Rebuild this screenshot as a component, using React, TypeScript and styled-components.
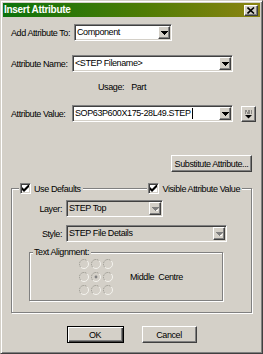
import React from 'react';
import styled, { createGlobalStyle, css } from 'styled-components';

const GlobalStyle = createGlobalStyle`
  html, body {
    margin: 0;
    padding: 0;
    background: #d4d0c8;
  }
  body {
    font-family: "Liberation Sans", Arial, sans-serif;
    font-size: 9px;
    letter-spacing: -0.4px;
    color: #000;
  }
  * {
    box-sizing: border-box;
  }
`;

const raised = css`
  border: 1px solid;
  border-color: #fff #404040 #404040 #fff;
  box-shadow: inset -1px -1px #808080, inset 1px 1px #d4d0c8;
`;

const sunken = css`
  border: 1px solid;
  border-color: #808080 #fff #fff #808080;
  box-shadow: inset 1px 1px #404040, inset -1px -1px #d4d0c8;
`;

const etched = css`
  border: 1px solid #808080;
  box-shadow: inset 1px 1px #fff, 1px 1px #fff;
`;

const Window = styled.div`
  width: 263px;
  height: 354px;
  background: #d4d0c8;
  border: 1px solid;
  border-color: #d4d0c8 #404040 #404040 #d4d0c8;
  box-shadow: inset 1px 1px #fff, inset -1px -1px #808080;
  padding: 2px;
  display: flex;
  flex-direction: column;
`;

const TitleBar = styled.div`
  height: 14px;
  flex: none;
  background: linear-gradient(to right, #0c720c, #4f7c04 55%, #8c8412);
  display: flex;
  align-items: center;
  justify-content: space-between;
  padding: 0 2px 0 1px;
`;

const Title = styled.span`
  color: #fff;
  font-weight: bold;
  font-size: 10px;
  letter-spacing: -0.3px;
  line-height: 14px;
`;

const CloseButton = styled.div`
  width: 14px;
  height: 11px;
  ${raised}
  background: #d4d0c8;
  display: flex;
  align-items: center;
  justify-content: center;
`;

const Body = styled.div`
  flex: 1;
  display: flex;
  flex-direction: column;
  padding: 7px 8px 0 8px;
`;

const FieldRow = styled.div<{ $top: number }>`
  display: flex;
  align-items: center;
  height: 17px;
  margin-top: ${(p) => p.$top}px;
`;

const Label = styled.span<{ $width: number; $right?: boolean }>`
  width: ${(p) => p.$width}px;
  flex: none;
  white-space: nowrap;
  text-align: ${(p) => (p.$right ? 'right' : 'left')};
  padding-right: ${(p) => (p.$right ? 4 : 0)}px;
`;

const Combo = styled.div<{ $width: number; $disabled?: boolean }>`
  width: ${(p) => p.$width}px;
  height: 17px;
  flex: none;
  ${sunken}
  background: ${(p) => (p.$disabled ? '#d4d0c8' : '#fff')};
  padding: 1px;
  display: flex;
`;

const ComboText = styled.span`
  flex: 1;
  padding-left: 1px;
  line-height: 13px;
  white-space: nowrap;
  overflow: hidden;
  display: flex;
  align-items: center;
`;

const Caret = styled.span`
  display: inline-block;
  width: 1px;
  height: 11px;
  background: #000;
  margin-left: 1px;
`;

const DropButton = styled.div`
  width: 12px;
  flex: none;
  ${raised}
  background: #d4d0c8;
  display: flex;
  align-items: center;
  justify-content: center;
`;

const SmallButton = styled.div`
  width: 15px;
  height: 16px;
  flex: none;
  margin-left: 8px;
  ${raised}
  background: #d4d0c8;
  display: flex;
  align-items: center;
  justify-content: center;
`;

const UsageRow = styled.div`
  margin-top: 9px;
  height: 12px;
  display: flex;
  align-items: center;
  gap: 7px;
  padding-left: 87px;
`;

const ButtonRow = styled.div<{ $top: number; $align: string; $gap?: number }>`
  display: flex;
  justify-content: ${(p) => p.$align};
  gap: ${(p) => p.$gap ?? 0}px;
  margin-top: ${(p) => p.$top}px;
`;

const Button = styled.div<{ $width: number; $default?: boolean }>`
  width: ${(p) => p.$width}px;
  height: 17px;
  background: #d4d0c8;
  display: flex;
  align-items: center;
  justify-content: center;
  white-space: nowrap;
  ${(p) =>
    p.$default
      ? css`
          border: 1px solid #000;
          box-shadow: inset 1px 1px #fff, inset -1px -1px #404040,
            inset -2px -2px #808080;
        `
      : raised}
`;

const Group = styled.div`
  margin-top: 16px;
  ${etched}
  height: 125px;
  display: flex;
  flex-direction: column;
`;

const GroupHeader = styled.div`
  display: flex;
  margin-top: -7px;
  padding: 0 9px 0 7px;
`;

const CheckLabel = styled.label<{ $push?: boolean }>`
  display: flex;
  align-items: center;
  gap: 3px;
  height: 13px;
  padding: 0 2px 0 1px;
  background: #d4d0c8;
  margin-left: ${(p) => (p.$push ? 'auto' : '0')};
  white-space: nowrap;
`;

const CheckBox = styled.span`
  width: 11px;
  height: 11px;
  ${sunken}
  background: #fff;
  display: flex;
  align-items: center;
  justify-content: center;
`;

const SubGroup = styled.div`
  margin: 10px 0 0 17px;
  width: 194px;
  height: 49px;
  ${etched}
  display: flex;
  flex-direction: column;
`;

const Legend = styled.span`
  align-self: flex-start;
  margin: -7px 0 0 3px;
  padding: 0 2px 0 1px;
  height: 12px;
  line-height: 12px;
  background: #d4d0c8;
`;

const AlignRow = styled.div`
  display: flex;
  align-items: center;
  gap: 17px;
  margin: 1px 0 0 49px;
`;

const RadioGrid = styled.div`
  display: grid;
  grid-template-columns: repeat(3, 10px);
  grid-auto-rows: 10px;
  column-gap: 2px;
  row-gap: 3px;
`;

const ArrowIcon: React.FC<{ disabled?: boolean }> = ({ disabled }) => (
  <svg width="7" height="4" viewBox="0 0 7 4">
    {disabled && <path d="M2 4h4v-1h1v-1h1z" fill="#fff" />}
    <path d="M0 0h7v1h-1v1h-1v1h-1v1h-1v-1h-1v-1h-1v-1h-1z" fill={disabled ? '#808080' : '#000'} />
  </svg>
);

const Radio: React.FC<{ checked?: boolean }> = ({ checked }) => (
  <svg width="10" height="10" viewBox="0 0 10 10">
    <circle cx="5" cy="5" r="4.5" fill="#d4d0c8" />
    <path d="M1.8 8.2A4.5 4.5 0 0 1 8.2 1.8" fill="none" stroke="#9a9890" strokeWidth="1" strokeDasharray="1.4 0.8" />
    <path d="M8.2 1.8A4.5 4.5 0 0 1 1.8 8.2" fill="none" stroke="#f4f3ee" strokeWidth="1" />
    {checked && <circle cx="5" cy="5" r="1.4" fill="#808080" />}
  </svg>
);

const CheckMark = () => (
  <svg width="7" height="7" viewBox="0 0 7 7">
    <path d="M0 2v3l2 2l5-5v-3l-5 5z" fill="#000" />
  </svg>
);

const radios = [false, false, false, false, true, false, false, false, false];

export default function App() {
  return (
    <>
      <GlobalStyle />
      <Window>
        <TitleBar>
          <Title>Insert Attribute</Title>
          <CloseButton>
            <svg width="8" height="7" viewBox="0 0 8 7">
              <path d="M0.5 0.5L7 6.5M7 0.5L0.5 6.5" stroke="#000" strokeWidth="1.6" />
            </svg>
          </CloseButton>
        </TitleBar>
        <Body>
          <FieldRow $top={0}>
            <Label $width={63}>Add Attribute To:</Label>
            <Combo $width={98}>
              <ComboText>Component</ComboText>
              <DropButton>
                <ArrowIcon />
              </DropButton>
            </Combo>
          </FieldRow>
          <FieldRow $top={14}>
            <Label $width={61}>Attribute Name:</Label>
            <Combo $width={161}>
              <ComboText>&lt;STEP Filename&gt;</ComboText>
              <DropButton>
                <ArrowIcon />
              </DropButton>
            </Combo>
          </FieldRow>
          <UsageRow>
            <span>Usage:</span>
            <span>Part</span>
          </UsageRow>
          <FieldRow $top={12}>
            <Label $width={61}>Attribute Value:</Label>
            <Combo $width={161}>
              <ComboText>
                SOP63P600X175-28L49.STEP
                <Caret />
              </ComboText>
              <DropButton>
                <ArrowIcon />
              </DropButton>
            </Combo>
            <SmallButton>
              <svg width="9" height="10" viewBox="0 0 9 10">
                <path d="M1 2h2M4 2h2M7 2h1M1 4h1M3 4h3M7 4h1" stroke="#404040" strokeWidth="1" />
                <path d="M1 6h7l-3.5 3.5z" fill="#000" />
              </svg>
            </SmallButton>
          </FieldRow>
          <ButtonRow $top={33} $align="flex-end">
            <Button $width={81}>Substitute Attribute...</Button>
          </ButtonRow>
          <Group>
            <GroupHeader>
              <CheckLabel>
                <CheckBox>
                  <CheckMark />
                </CheckBox>
                Use Defaults
              </CheckLabel>
              <CheckLabel $push>
                <CheckBox>
                  <CheckMark />
                </CheckBox>
                Visible Attribute Value
              </CheckLabel>
            </GroupHeader>
            <FieldRow $top={5}>
              <Label $width={54} $right>
                Layer:
              </Label>
              <Combo $width={97} $disabled>
                <ComboText>STEP Top</ComboText>
                <DropButton>
                  <ArrowIcon disabled />
                </DropButton>
              </Combo>
            </FieldRow>
            <FieldRow $top={8}>
              <Label $width={54} $right>
                Style:
              </Label>
              <Combo $width={161} $disabled>
                <ComboText>STEP File Details</ComboText>
                <DropButton>
                  <ArrowIcon disabled />
                </DropButton>
              </Combo>
            </FieldRow>
            <SubGroup>
              <Legend>Text Alignment:</Legend>
              <AlignRow>
                <RadioGrid>
                  {radios.map((r, i) => (
                    <Radio key={i} checked={r} />
                  ))}
                </RadioGrid>
                <span>Middle&nbsp; Centre</span>
              </AlignRow>
            </SubGroup>
          </Group>
          <ButtonRow $top={13} $align="center" $gap={18}>
            <Button $width={57} $default>
              OK
            </Button>
            <Button $width={55}>Cancel</Button>
          </ButtonRow>
        </Body>
      </Window>
    </>
  );
}
